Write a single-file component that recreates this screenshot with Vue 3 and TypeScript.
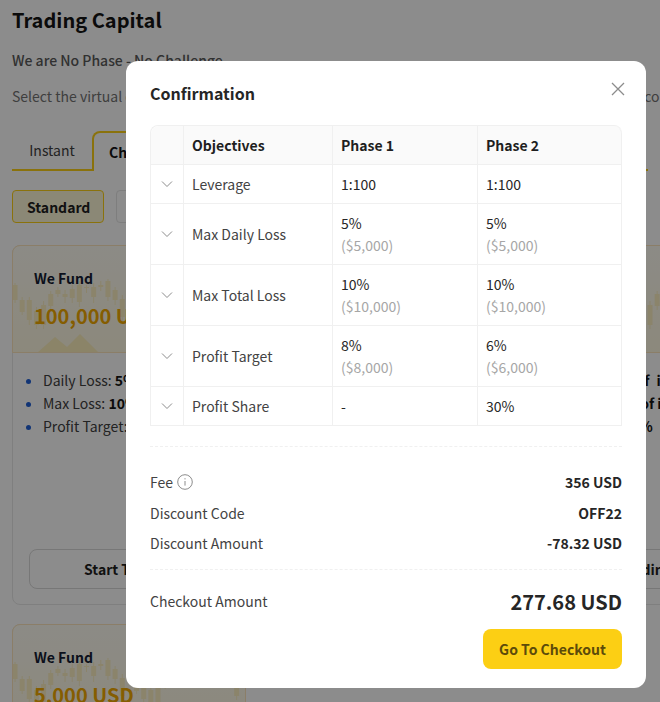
<template>
  <div class="page">
    <h1 class="page-title">Trading Capital</h1>
    <h2 class="page-sub">We are No Phase - No Challenge</h2>
    <p class="page-desc">Select the virtual capital you would like to trade and then complete every step of the challenge to continue</p>

    <div class="tabs">
      <div class="tab">Instant</div>
      <div class="tab active">Challenge</div>
      <div class="tab-rest"></div>
    </div>

    <div class="types">
      <div class="type active">Standard</div>
      <div class="type">Aggressive</div>
    </div>

    <div class="plans">
      <div v-for="plan in plans" :key="plan.id" class="plan">
        <div class="plan-head">
          <svg class="plan-art" viewBox="0 0 234 108" width="234" height="108" aria-hidden="true">
            <g v-for="candle in candles" :key="candle.x">
              <line :x1="candle.x" :x2="candle.x" :y1="candle.top" :y2="candle.bottom" class="wick" />
              <rect :x="candle.x - 2.5" :y="candle.bodyTop" width="5" :height="candle.bodyHeight" class="body" />
            </g>
            <path d="M25 108 L43 92 L55 102 L68 89 L87 108 Z" class="hill" />
            <circle cx="208" cy="0" r="13" class="hill" />
          </svg>
          <div class="plan-label">We Fund</div>
          <div class="plan-amount">{{ plan.amount }}</div>
        </div>
        <ul class="plan-list">
          <li>Daily Loss: <b>{{ plan.daily }}</b></li>
          <li>Max Loss: <b>{{ plan.max }}</b></li>
          <li>Profit Target: <b>{{ plan.target }}</b></li>
        </ul>
        <button class="plan-btn" type="button">{{ plan.cta }}</button>
      </div>
    </div>
  </div>

  <div class="overlay">
    <div class="modal">
      <div class="modal-head">
        <div class="modal-title">Confirmation</div>
        <svg class="close" viewBox="0 0 14 14" width="14" height="14" aria-label="Close">
          <path d="M1 1 L13 13 M13 1 L1 13" />
        </svg>
      </div>

      <table class="objectives">
        <thead>
          <tr>
            <th class="col-toggle"></th>
            <th class="col-name">Objectives</th>
            <th class="col-phase">Phase 1</th>
            <th>Phase 2</th>
          </tr>
        </thead>
        <tbody>
          <tr v-for="row in rows" :key="row.name">
            <td class="toggle">
              <svg viewBox="0 0 12 12" width="12" height="12"><path d="M1 3.5 L6 8.5 L11 3.5" /></svg>
            </td>
            <td class="name">{{ row.name }}</td>
            <td v-for="cell in row.cells" :key="cell.id">
              {{ cell.value }}
              <div v-if="cell.note" class="note">{{ cell.note }}</div>
            </td>
          </tr>
        </tbody>
      </table>

      <div class="summary">
        <div class="summary-row">
          <span class="fee">Fee
            <svg viewBox="0 0 16 16" width="16" height="16">
              <circle cx="8" cy="8" r="7.3" />
              <path d="M8 7 V11.6" />
              <path d="M8 4.2 V5.4" />
            </svg>
          </span>
          <b>356 USD</b>
        </div>
        <div class="summary-row code"><span>Discount Code</span><b>OFF22</b></div>
        <div class="summary-row"><span>Discount Amount</span><b>-78.32 USD</b></div>
      </div>

      <div class="total">
        <span>Checkout Amount</span>
        <b>277.68 USD</b>
      </div>

      <div class="actions">
        <button class="checkout" type="button">Go To Checkout</button>
      </div>
    </div>
  </div>
</template>

<script setup lang="ts">
interface Cell { id: string; value: string; note?: string }
interface Row { name: string; cells: Cell[] }

const rows: Row[] = [
  { name: 'Leverage', cells: [{ id: 'a', value: '1:100' }, { id: 'b', value: '1:100' }] },
  {
    name: 'Max Daily Loss',
    cells: [
      { id: 'a', value: '5%', note: '($5,000)' },
      { id: 'b', value: '5%', note: '($5,000)' },
    ],
  },
  {
    name: 'Max Total Loss',
    cells: [
      { id: 'a', value: '10%', note: '($10,000)' },
      { id: 'b', value: '10%', note: '($10,000)' },
    ],
  },
  {
    name: 'Profit Target',
    cells: [
      { id: 'a', value: '8%', note: '($8,000)' },
      { id: 'b', value: '6%', note: '($6,000)' },
    ],
  },
  { name: 'Profit Share', cells: [{ id: 'a', value: '-' }, { id: 'b', value: '30%' }] },
]

const plans = [
  { id: 'a', amount: '100,000 USD', daily: '5%', max: '10%', target: '10%', cta: 'Start Trading' },
  { id: 'b', amount: '50,000 USD', daily: '5%', max: '10%', target: '10%', cta: 'Start Trading' },
  { id: 'c', amount: '25,000 USD', daily: '5%\u2002of\u2002initial', max: '10%\u2002\u2009of initial', target: '10%', cta: 'Start A Trading' },
  { id: 'd', amount: '5,000 USD', daily: '5%', max: '10%', target: '10%', cta: 'Start Trading' },
]

// wick top, body top, body bottom, wick bottom - relative to the card header
const candleData = [
  [38, 40, 55, 58], [52, 55, 67, 70], [52, 55, 75, 80], [62, 66, 80, 84],
  [56, 60, 80, 84], [46, 49, 61, 65], [42, 45, 49, 52], [45, 49, 52, 58],
  [40, 44, 53, 58], [36, 40, 57, 62], [40, 42, 43, 48], [38, 42, 52, 58],
  [36, 40, 42, 46], [34, 36, 52, 56], [42, 45, 55, 60], [50, 54, 72, 76],
]

const candles = Array.from({ length: 33 }).map((_, index) => {
  const [top, bodyTop, bodyBottom, bottom] = candleData[index % candleData.length]
  return { x: 3 + index * 7.15, top, bottom, bodyTop, bodyHeight: bodyBottom - bodyTop }
})
</script>

<style scoped>
.page {
  width: 660px;
  height: 702px;
  box-sizing: border-box;
  padding: 6px 12px 0;
  overflow: hidden;
  background: #fff;
  color: #1f1f1f;
  font-family: "Noto Sans CJK SC", "Noto Sans", sans-serif;
  font-size: 14px;
}

.page-title {
  margin: 0;
  font-size: 20px;
  line-height: 28px;
  font-weight: 700;
  color: #141414;
}

.page-sub {
  margin: 15px 0 0;
  font-size: 14px;
  line-height: 22px;
  font-weight: 500;
  color: #595959;
  white-space: nowrap;
}

.page-desc {
  margin: 14px 0 0;
  font-size: 14px;
  line-height: 22px;
  color: #737373;
  white-space: nowrap;
}

.tabs {
  display: flex;
  margin-top: 24px;
  height: 40px;
}

.tab {
  display: flex;
  align-items: center;
  justify-content: center;
  box-sizing: border-box;
  width: 80px;
  border-bottom: 2px solid #fcd016;
  color: #404040;
}

.tab.active {
  justify-content: flex-start;
  width: 104px;
  padding-left: 15px;
  border: 2px solid #fcd016;
  border-bottom: none;
  border-radius: 8px 8px 0 0;
  font-weight: 700;
  color: #141414;
}

.tab-rest {
  flex: 1;
  border-bottom: 2px solid #fcd016;
}

.types {
  display: flex;
  gap: 12px;
  margin-top: 19px;
}

.type {
  box-sizing: border-box;
  height: 33px;
  padding: 0 13px 0 14px;
  display: flex;
  align-items: center;
  border: 1px solid #e5e5e5;
  border-radius: 4px;
  font-weight: 500;
}

.type.active {
  border-color: #fcd016;
  background: #fef8d8;
  font-weight: 700;
}

.plans {
  display: grid;
  grid-template-columns: repeat(3, 234px);
  gap: 19px 12px;
  margin-top: 22px;
}

.plan {
  box-sizing: border-box;
  height: 360px;
  display: flex;
  flex-direction: column;
  border: 1px solid #e8e8e8;
  border-radius: 8px;
}

.plan-head {
  position: relative;
  height: 108px;
  margin: -1px -1px 0;
  box-sizing: border-box;
  padding: 21px 21px 0;
  overflow: hidden;
  border: 1px solid #fde6bd;
  border-radius: 8px 8px 0 0;
  background: linear-gradient(180deg, #fffdf4, #fff9e2);
}

.plan-art {
  position: absolute;
  left: -1px;
  top: -1px;
}

.wick {
  stroke: #fdf0c4;
  stroke-width: 1;
}

.body {
  fill: #fdf0c4;
}

.hill {
  fill: #fdf0bd;
}

.plan-label {
  position: relative;
  font-size: 14px;
  line-height: 22px;
  font-weight: 700;
  color: #141d33;
}

.plan-amount {
  position: relative;
  margin-top: 12px;
  font-size: 20px;
  line-height: 30px;
  font-weight: 700;
  color: #f2a900;
  white-space: nowrap;
}

.plan-list {
  margin: 16px 0 0;
  padding: 0 0 0 30px;
  font-size: 14px;
  line-height: 22px;
  color: #404040;
  white-space: nowrap;
  overflow: hidden;
}

.plan-list li {
  margin-bottom: 1px;
}

.plan-list li::marker {
  color: #1f5fd6;
}

.plan-list b {
  color: #141414;
}

.plan-btn {
  margin: auto 16px 15px;
  height: 40px;
  background: #fff;
  border: 1px solid #d9d9d9;
  border-radius: 8px;
  font-family: inherit;
  font-size: 14px;
  font-weight: 700;
  color: #1f1f1f;
  white-space: nowrap;
}

.overlay {
  position: fixed;
  inset: 0;
  overflow: hidden;
  background: rgba(0, 0, 0, 0.45);
  font-family: "Noto Sans CJK SC", "Noto Sans", sans-serif;
}

.modal {
  width: 520px;
  height: 627px;
  box-sizing: border-box;
  margin: 61px 0 0 126px;
  padding: 19px 24px;
  background: #fff;
  border-radius: 12px;
  color: #262626;
  font-size: 14px;
  line-height: 22px;
}

.modal-head {
  display: flex;
  align-items: flex-start;
  justify-content: space-between;
  height: 45px;
}

.modal-title {
  font-size: 16px;
  line-height: 26px;
  font-weight: 700;
}

.close {
  margin: 2px -3px 0 0;
}

.close path {
  stroke: #8c8c8c;
  stroke-width: 1.3;
  fill: none;
}

.objectives {
  width: 472px;
  table-layout: fixed;
  border-collapse: separate;
  border-spacing: 0;
  border-top: 1px solid #f0f0f0;
  border-left: 1px solid #f0f0f0;
  border-radius: 8px 8px 0 0;
}

.objectives th,
.objectives td {
  box-sizing: border-box;
  padding: 8px;
  border-right: 1px solid #f0f0f0;
  border-bottom: 1px solid #f0f0f0;
  text-align: left;
  vertical-align: middle;
}

.objectives th {
  background: #fafafa;
  font-weight: 700;
  color: #1f1f1f;
}

.objectives th:first-child {
  border-top-left-radius: 8px;
}

.objectives th:last-child {
  border-top-right-radius: 8px;
}

.col-toggle {
  width: 33px;
}

.col-name {
  width: 149px;
}

.col-phase {
  width: 145px;
}

.objectives td.toggle {
  padding: 0;
}

.toggle svg {
  display: block;
  margin: 0 auto;
}

.toggle path {
  stroke: #8c8c8c;
  stroke-width: 1;
  fill: none;
}

.name {
  color: #434343;
}

.note {
  color: #a6a6a6;
}

.summary {
  margin-top: 20px;
  padding: 20px 0 11px;
  border-top: 1px dashed #f0f0f0;
  border-bottom: 1px dashed #f0f0f0;
}

.summary-row {
  display: flex;
  align-items: center;
  justify-content: space-between;
  height: 30px;
  color: #434343;
}

.summary-row.code {
  margin-top: 1px;
}

.summary-row b {
  font-weight: 700;
  color: #262626;
}

.fee {
  display: flex;
  align-items: center;
  gap: 4px;
}

.fee circle,
.fee path {
  stroke: #8c8c8c;
  stroke-width: 1;
  fill: none;
}

.total {
  display: flex;
  align-items: center;
  justify-content: space-between;
  margin-top: 17px;
  height: 30px;
  color: #434343;
}

.total span {
  margin-top: -2px;
}

.total b {
  font-size: 20px;
  font-weight: 700;
  color: #262626;
}

.actions {
  display: flex;
  justify-content: flex-end;
  margin-top: 12px;
}

.checkout {
  width: 139px;
  height: 40px;
  border: none;
  border-radius: 8px;
  background: #fccf14;
  font-family: inherit;
  font-size: 14px;
  font-weight: 700;
  color: #5c4b0a;
}
</style>

<style>
html,
body {
  margin: 0;
  overflow: hidden;
}
</style>
